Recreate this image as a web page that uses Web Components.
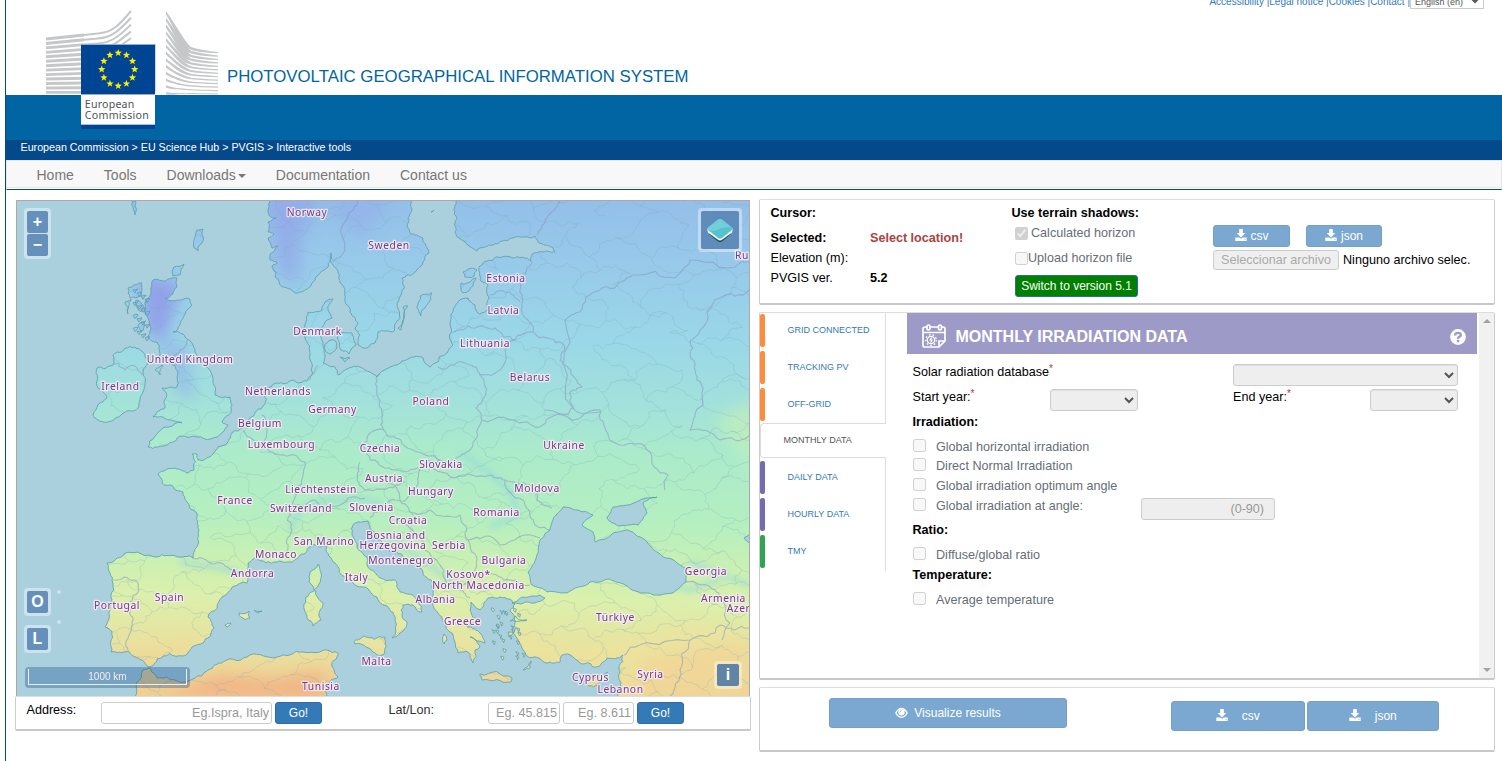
<!DOCTYPE html>
<html lang="en">
<head>
<meta charset="utf-8">
<title>PVGIS Interactive tools</title>
<style>
html,body{margin:0;height:100%}
body{overflow:hidden;background:#fff;font-family:"Liberation Sans",Arial,sans-serif;font-size:12.6px;line-height:20px;color:#000}
</style>
</head>
<body>
<pvgis-app></pvgis-app>
<script>
const define=(name,html,init)=>customElements.define(name,class extends HTMLElement{
  constructor(){super();this.attachShadow({mode:'open'}).innerHTML='<style>*{box-sizing:border-box}:host{display:block;box-sizing:border-box}</style>'+html;}
  connectedCallback(){if(init)init.call(this,this.shadowRoot);}
});

/* Commission logo: sweeping stripes, flag and caption */
define('ec-logo',`<style>:host{width:174px;height:122px;flex:none}svg{display:block}text{font-family:"Noto Sans",sans-serif;font-size:10.6px;fill:#4d5356}</style>
<svg width="174" height="122" viewBox="45 8 174 122"><g id="s" fill="none" stroke="#c5c7c8"></g><g id="w" fill="#c5c7c8"></g>
<rect x="81" y="44.5" width="74" height="50" fill="#004494"/><rect x="81" y="44" width="74.5" height="1" fill="#8eaed2"/><rect x="155" y="45" width="1" height="46" fill="#c9d6e8"/><g id="st" fill="#ffed00"></g>
<rect x="81" y="94" width="74" height="31" fill="#fff"/><rect x="81" y="94" width="74" height="1" fill="#9dadbd"/><rect x="81" y="124" width="74" height="1.4" fill="#aabfda"/><rect x="81" y="125" width="74" height="4" fill="#004494"/>
<text x="84.8" y="108" textLength="49.5">European</text><text x="84.8" y="119" textLength="64">Commission</text></svg>`,
function(r){
  let s='',w='',t='';
  for(let i=0;i<13;i++){const y=39+i*4.45,m=33.5+i*5,e=12+i*6.8;
    s+=`<path stroke-width="2.9" d="M46 ${y}L84 ${Math.min(y,y-4+i*.35)}"/>`;
    if(i<5)s+=`<path stroke-width="2" d="M84 ${y-4+i*.35}L98 ${m}C112 ${m-1} 119 ${m-8+i*.3} 131 ${e-1}"/>`;}
  for(let i=0;i<13;i++){const y=11+i*6.75,e=52+i*3.45,k=1-i/13;
    w+=`<path d="M166 ${y}C${171+k*3} ${y+10*k+1} ${181+k*4} ${e-10*k} 191 ${e-5*k}Q200 ${e-2*k} 218 ${e}V${e+1.2}Q198 ${e+.8} 189 ${e-4*k+1}C180 ${e-6*k} 174 ${y+13*k+3} 166 ${y+3.6-i*.1}Z"/>`;}
  for(let i=0;i<12;i++){const a=i*Math.PI/6,cx=118.2+16.5*Math.sin(a),cy=69.4-16.5*Math.cos(a);let p='';
    for(let k=0;k<10;k++){const q=k*Math.PI/5,R=k%2?1.6:3.9;p+=(cx+R*Math.sin(q)).toFixed(2)+','+(cy-R*Math.cos(q)).toFixed(2)+' ';}
    t+=`<polygon points="${p}"/>`;}
  r.getElementById('s').innerHTML=s;r.getElementById('w').innerHTML=w;r.getElementById('st').innerHTML=t;
});

define('pv-header',`<style>
:host{height:140px;background:linear-gradient(#fff 95px,#0065a2 95px)}
.row{display:flex;height:140px;padding-left:39px}
h1{margin:67px 0 0 8px;font-size:16.8px;line-height:19px;font-weight:400;color:#0065a2;white-space:nowrap;height:19px}
ec-logo{margin-top:8px}
.links{margin:-9px 18px 0 auto;display:flex;height:18px;font-size:10px;line-height:22px;color:#337ab7;white-space:pre}
select{height:18px;width:74px;border:1px solid #ccc;background:#fff;font:9px "Liberation Sans";color:#555;padding:3px 0 0}
</style><div class="row"><ec-logo></ec-logo><h1>PHOTOVOLTAIC GEOGRAPHICAL INFORMATION SYSTEM</h1>
<div class="links"><a>Accessibility </a>|<a>Legal notice </a>|<a>Cookies </a>|<a>Contact </a>|<select><option>English (en)</option></select></div></div>`);

define('pv-crumbs',`<style>:host{height:20px;background:#044a8b;color:#fff;font-size:10.7px;line-height:15px;padding-left:14.5px}</style><slot></slot>`);

define('pv-nav',`<style>:host{height:30px;background:#f8f8f8;border:1px solid #e7e7e7;border-bottom:1px solid #044a8b;box-shadow:inset 0 -1px #fff,inset 0 -2px #e7e7e7;padding-left:29.5px;display:flex;gap:30px;font-size:14px;line-height:29px;color:#777}
i{display:inline-block;border:4px solid transparent;border-top-color:#777;border-bottom:0;margin-left:2px;vertical-align:middle}</style>
<span>Home</span><span>Tools</span><span>Downloads<i></i></span><span>Documentation</span><span>Contact us</span>`);

define('pv-panel',`<style>:host{border:1px solid #ccc;border-top-color:#ddd;border-bottom:2px solid #c8c8c8;border-radius:2px;background:#fff}</style><slot></slot>`);

define('pv-button',`<style>:host{display:flex;align-items:center;justify-content:center;height:22px;border:1px solid #2e6da4;border-radius:3px;background:#337ab7;color:#fff;font-size:12px;gap:var(--gap,4px);white-space:nowrap}
:host([disabled]){background:#7aa8d1;border-color:#759fc7}:host([green]){background:#008000;border-color:#2e6da4}</style><slot></slot>`);

define('icon-download',`<style>:host{width:12px;height:12px;flex:none}svg{display:block;margin-top:-1px}</style><svg width="12" height="12" viewBox="0 0 12 12" fill="#fff"><path d="M4.200 0h3.600v4h2.500L6 8.400 1.700 4h2.500z"/><path d="M.3 8.500h4L6 9.800l1.700-1.300h4V12H.3z"/><path fill="#7aa8d1" d="M9.500 10h1v.8h-1z"/></svg>`);
define('icon-eye',`<style>:host{width:13px;height:12px;flex:none}svg{display:block}</style><svg width="13" height="12" viewBox="0 0 14 12"><path fill="none" stroke="#fff" stroke-width="1.500" d="M.9 6Q3.400 1.200 7 1.200T13.100 6Q10.600 10.600 7 10.600T.9 6z"/><circle cx="7" cy="5.200" r="3.400" fill="#fff"/><path fill="none" stroke="#7aa8d1" stroke-width=".9" d="M5.300 5.400Q5.300 3.600 7 3.500"/></svg>`);

/* Map geometry is drawn in page pixels; coastlines get a seeded roughening */
define('pv-map',`<style>
:host{position:relative;height:496px;border:1px solid #aaa;border-bottom:0;overflow:hidden}
svg{display:block}text{font-family:"Noto Sans",sans-serif;font-size:10.3px;letter-spacing:.55px;text-anchor:middle;fill:#773a7d;font-weight:400;stroke:#f3ecf7;stroke-width:2.6px;stroke-opacity:.85;paint-order:stroke;stroke-linejoin:round}
.c{position:absolute;background:rgba(255,255,255,.4);border-radius:4px;padding:3px}
.c b{display:flex;align-items:center;justify-content:center;width:21px;height:22px;background:#6590bb;color:#fff;font-size:16px;border-radius:2px}
.c b+b{margin-top:1px}
.dot{position:absolute;width:4px;height:4px;border-radius:2px;background:rgba(255,255,255,.4);left:40px}
.scale{position:absolute;left:8px;bottom:8px;width:165px;height:21px;border-radius:4px;background:rgba(0,60,136,.3);padding:2px 3px}
.scale div{height:16px;border:1px solid #eee;border-top:0;color:#eee;font-size:10px;line-height:15px;text-align:center}
</style>
<svg width="732" height="495" viewBox="17 201 732 495">
<defs><linearGradient id="g" gradientUnits="userSpaceOnUse" x1="380" y1="201" x2="370" y2="696"><stop offset="0" stop-color="#94bfe9"/><stop offset=".1" stop-color="#97c8ea"/><stop offset=".27" stop-color="#9ad7e8"/><stop offset=".4" stop-color="#a2e1dc"/><stop offset=".5" stop-color="#abebcb"/><stop offset=".64" stop-color="#b5efc0"/><stop offset=".72" stop-color="#c8f0b4"/><stop offset=".8" stop-color="#dbf0ac"/><stop offset=".9" stop-color="#e8e3a0"/><stop offset="1" stop-color="#f0cf94"/></linearGradient>
<filter id="b" x="-50%" y="-50%" width="200%" height="200%"><feGaussianBlur stdDeviation="8"/></filter><filter id="b2" x="-50%" y="-50%" width="200%" height="200%"><feGaussianBlur stdDeviation="3"/></filter>
<clipPath id="k"></clipPath></defs>
<rect x="17" y="201" width="732" height="495" fill="#aad0de"/>
<g id="land" fill="url(#g)"></g>
<g clip-path="url(#k)">
 <g filter="url(#b)">
 <path fill="#93a4e9" opacity=".7" d="M265 195H320L300 240 298 285 280 275z"/><path fill="#9098ea" opacity=".85" d="M140 275L182 283 165 340 145 335z"/><path fill="#93b5ea" opacity=".8" d="M155 335L185 345 195 400 180 395z"/><path fill="#93aceb" opacity=".5" d="M320 195H395L360 240z"/>
 <path fill="#f2b184" opacity=".9" d="M160 696L220 675 270 680 325 670V700z"/><path fill="#f2c08c" opacity=".8" d="M640 660L750 640V700H640z"/><path fill="#f2d894" opacity=".6" d="M125 650L200 635 190 655 130 660z"/><path fill="#efe39c" opacity=".6" d="M515 625L560 650 620 640 700 620 750 640V700H520z"/><path fill="#c4f1b5" opacity=".7" d="M715 420L755 400V470z"/>
 </g>
 <g filter="url(#b2)" fill="none" stroke="#8fd5df" stroke-width="5" opacity=".6"><path d="M290 530L300 510 325 500 365 500 385 505M460 452L485 470 510 490 518 515 490 527M385 535L430 565 460 590M640 575L690 590 720 580M690 562L749 585M180 562L215 567 240 573"/></g>
 <g id="mesh" fill="none" stroke="#7fa7b8" stroke-width=".7" opacity=".38"></g>
 <g id="bord" fill="none" stroke="#8795bd" stroke-width="1.100" opacity=".55"></g>
</g>
<g id="sea" fill="#aad0de"></g>
<g id="coast" fill="none" stroke="#5c9daa" stroke-width=".8"></g>
<g id="lab"></g></svg>
<div class="c" style="left:7px;top:7px"><b>+</b><b>−</b></div>
<div class="c" style="left:7px;top:387px"><b>O</b></div><div class="c" style="left:7px;top:424px"><b>L</b></div><i class="dot" style="top:389px"></i><i class="dot" style="top:419px"></i>
<div class="c" style="right:7px;top:7px"><b style="width:38px;height:38px;background:#5f8cba"><svg width="28" height="28" viewBox="0 0 28 28"><path fill="#24505e" d="M3 14L14 24.5 25 14V17Q25 18 24 19L16 25.5Q14 27 12 25.5L4 19Q3 18 3 17z"/><path fill="#fff" d="M1.500 12H26.500V15Q26.500 16 25.500 17L16 23.800Q14 25 12 23.800L2.500 17Q1.500 16 1.500 15z"/><path fill="#53c3d0" d="M2 11.500L11.500 4Q14 2 16.500 4L26 11.500Q27 13 26 14L16 22Q14 23.500 12 22L2 14Q1 13 2 11.500z"/><path fill="#72cfda" d="M2 11.500L11.500 4Q14 2 16.500 4L26 11.500Q16 10.500 11 14 7 15.500 2.500 14.500Q1 13 2 11.500z"/></svg></b></div>
<div class="c" style="right:7px;bottom:7px"><b style="background:#5f84a5;width:22px">i</b></div>
<div class="scale"><div>1000 km</div></div>`,
function(r){
 let seed=7;const rnd=()=>(seed=(seed*16807)%2147483647)/2147483647-.5;
 const rough=(s,closed=true,amp=.34)=>{let p=s.trim().split(/\s+/).map(v=>v.split(',').map(Number));if(closed)p.push(p[0]);
  for(let n=0;n<3;n++){const q=[p[0]];for(let i=1;i<p.length;i++){const a=p[i-1],b=p[i],dx=b[0]-a[0],dy=b[1]-a[1],l=Math.hypot(dx,dy);
   if(l>3&&l<140){const t=rnd()*amp;q.push([(a[0]+b[0])/2-dy*t,(a[1]+b[1])/2+dx*t]);}q.push(b);}p=q;}
  return 'M'+p.map(v=>v[0].toFixed(1)+','+v[1].toFixed(1)).join('L')+(closed?'Z':'');};
 const land=[
 '270,201 269,215 276,218 268,222 268,232 274,234 268,238 272,248 278,246 270,254 270,260 277,262 272,266 276,272 275,277 287,288 298,293 310,287 320,273 328,267 331,253 333,265 338,272 342,285 345,298 350,312 358,323 355,328 360,335 358,345 367,348 375,343 378,332 385,331 393,332 400,318 401,295 402,278 413,274 423,262 429,253 423,238 410,233 408,218 411,200 411,40 270,40',
 '456,201 457,218 455,232 468,245 477,251 493,245 513,238 535,236 538,242 553,248 555,252 543,252 532,254 531,261 513,258 493,260 479,267 480,280 488,285 489,298 488,310 480,314 475,305 468,298 458,302 453,312 451,328 453,345 447,353 439,357 438,362 430,367 423,358 408,359 397,365 380,373 377,377 370,372 360,367 347,369 338,375 335,367 323,363 325,355 323,342 320,333 332,318 328,310 333,299 325,302 322,310 308,312 306,322 305,338 310,355 312,375 308,380 293,380 277,383 265,390 262,408 250,418 243,428 232,432 227,443 213,454 210,457 198,460 197,454 192,454 194,470 187,473 175,468 158,474 162,483 183,492 188,503 197,513 199,530 197,547 193,558 177,557 157,557 125,553 117,558 107,563 110,573 113,583 110,610 105,627 112,632 111,652 128,651 138,658 148,667 157,659 183,656 192,647 203,643 214,628 208,617 222,597 247,583 248,563 255,558 277,562 287,562 300,555 312,545 327,547 335,563 353,583 377,597 390,610 396,623 392,638 400,633 407,622 402,615 403,605 413,605 422,612 418,602 400,592 395,580 380,578 367,557 357,547 352,533 353,525 368,521 370,528 378,540 390,552 410,562 423,573 433,583 433,602 442,617 452,633 455,642 458,653 468,652 473,663 475,650 480,647 470,637 485,643 480,633 467,627 480,622 470,610 471,602 480,610 488,598 500,597 510,599 515,604 510,610 515,623 513,633 522,648 527,656 547,663 560,662 562,655 580,663 593,667 607,658 623,655 619,667 621,683 617,697 760,860 760,40 456,40',
 '153,280 177,278 177,287 165,298 190,299 192,305 180,325 173,332 183,334 193,345 200,362 213,382 215,395 230,397 232,405 222,422 228,425 223,432 197,437 177,438 167,445 148,447 163,428 182,423 170,420 153,417 165,408 162,388 177,387 178,372 170,363 158,358 157,342 148,338 148,318 145,302',
 '125,348 143,352 148,362 143,373 143,392 138,408 123,413 103,422 93,415 107,398 98,388 97,368 113,365 113,355',
 '135,697 143,670 150,668 157,678 175,680 193,679 208,670 223,662 250,655 277,657 303,652 327,650 338,653 332,663 338,677 327,687 327,697 327,780 135,780',
 '318,564 321,573 319,584 314,590 309,582 310,572','316,591 323,603 321,620 313,626 307,618 306,597','354,642 364,636 385,637 383,655 372,651 355,644','239,613 249,611 250,618 245,620','254,610 262,611 258,613','225,625 231,623 227,627','480,674 512,678 511,682 482,680','585,681 593,677 608,672 598,685 589,686','325,344 334,340 337,348 331,354 326,352','338,335 352,333 356,345 349,354 341,350','340,357 350,358 345,362','420,296 432,293 427,305 421,316 417,308','403,307 408,306 401,330 398,328','461,283 476,278 473,286 463,293','463,272 477,270 474,276 465,277','197,230 203,229 198,251 194,248 194,240','174,267 184,264 180,275 173,276','128,288 142,283 141,296 130,298','125,302 131,299 128,314','136,300 144,307 141,312','138,325 144,322 141,332','132,201 136,202 135,215','523,670 531,661 530,668','444,634 447,640 444,644','431,212 434,210','527,620 515,616 510,621','508,632 513,632 509,637','155,370 163,365 160,375'];
 for(let i=0;i<26;i++){const x=487+Math.abs(rnd())*70,y=607+Math.abs(rnd())*110;land.push(`${x},${y} ${x+3},${y+1} ${x+2},${y+4}`);}
 for(let i=0;i<16;i++){const x=133+i%4*4,y=290+i*3.2;land.push(`${x},${y} ${x+5},${y-1} ${x+2},${y+3}`);}
 const sea=['563,507 577,510 593,515 582,525 593,532 595,542 613,533 628,530 647,542 663,557 685,568 686,582 673,593 647,593 625,585 610,579 590,582 567,593 547,592 532,585 528,572 538,553 540,540 550,530 552,522','607,518 613,507 640,500 657,497 643,503 647,513 638,525 618,526','512,603 522,597 540,595 545,598 535,603 520,604','750,533 744,538 750,544'];
 const L=land.map(s=>rough(s)),S=sea.map(s=>rough(s,true,.2));
 const P=a=>a.map(d=>`<path d="${d}"/>`).join('');
 const $=i=>r.getElementById(i);
 $('land').innerHTML=P(L);$('k').innerHTML=P(L);$('sea').innerHTML=P(S);$('coast').innerHTML=P(L.concat(S));
 /* irregular province mesh */
 const pt={},W=27,H=24,g=(i,j)=>pt[i+'_'+j]||(pt[i+'_'+j]=[80+i*W+(j%2?W/2:0)+rnd()*17,200+j*H+((i+j)%2?6:-6)+rnd()*14]);
 let m='';for(let i=0;i<26;i++)for(let j=0;j<22;j++){const a=g(i,j),b=g(i+1,j),c=g(i,j+1);if(rnd()<.38)m+=rough(a+' '+b,false,.5);if((i+j)%2)m+=rough(a+' '+c,false,.5);}
 $('mesh').innerHTML=`<path d="${m}"/>`;
 $('bord').innerHTML=P(['333,262 345,245 343,225 357,205 355,190','537,235 545,220 560,201','532,261 525,275 522,298 528,320 533,332','490,295 505,292 520,302','453,332 468,326 495,328 515,340','515,340 500,370 480,375 470,365 438,367','533,332 548,338 564,345 563,365 575,378 582,387 570,392 573,408','533,332 515,340','480,375 484,398 476,408 482,420 525,422 540,427 562,415 573,408 600,410 605,428 620,445 650,452 668,475 665,490','380,374 377,395 382,418 384,430 401,440 418,452 440,460 455,460 470,450 482,420','573,408 565,320 580,312 600,290 625,280 635,275 675,278 690,260 749,262','749,290 720,298 700,330 690,355 697,380 703,405 690,430 720,440 749,436','262,415 267,425 262,445 280,455 305,462 296,490 290,510 292,530 288,545 288,558','310,380 318,365','384,430 360,445 370,460 385,468 400,470 420,468 440,460','360,462 357,480 365,490 388,488 405,482','292,505 315,500 340,505 365,498','243,430 265,448','192,557 212,564 233,570 247,573','113,580 135,580 139,590 130,602 133,620 129,635 128,650','420,468 415,490 395,500 380,510 370,518','420,468 455,478 490,475 505,480 530,485 537,500 552,508','430,510 460,515 468,540 500,545 540,538','505,480 525,505 535,525 550,530','400,520 420,535 425,550 440,565 445,590','468,540 475,570 460,590 470,598','487,575 510,580 530,585','624,655 640,645 690,640 720,625 749,628','686,582 715,590 725,605 722,640','690,640 680,670 670,696','110,362 125,370 135,366 142,375','167,360 180,350 188,338','545,410 600,412','385,480 400,500 410,512 430,510'].map(s=>rough(s,false,.4)));
 $('lab').innerHTML=[['Norway',307,216],['Sweden',389,249],['Estonia',506,282],['Latvia',503.500,314],['Lithuania',485,347],['Denmark',317.500,335],['United Kingdom',190,363],['Ireland',120.500,390],['Belarus',530,381],['Poland',431,405],['Netherlands',278,395],['Germany',332.500,413],['Belgium',260,427],['Luxembourg',281.500,448],['Czechia',380,452],['Ukraine',564,449],['Slovakia',441,468],['Austria',384,482],['Liechtenstein',321,493],['Hungary',431,495],['Moldova',537,492],['France',235,504],['Switzerland',301,512],['Slovenia',371.500,511],['Romania',496.500,516],['Croatia',408,524],['San Marino',324,545],['Bosnia and',396,539],['Herzegovina',393,549],['Serbia',449,549],['Monaco',276,558],['Montenegro',401,564],['Bulgaria',504,564],['Georgia',706,575],['Andorra',252.500,577],['Italy',356.500,581],['Kosovo*',468.500,578],['North Macedonia',478.500,589],['Spain',169.500,601],['Portugal',117,609],['Albania',435.500,603],['Armenia',723.500,602],['Azer',738.500,612],['Greece',462.500,625],['Türkiye',615.500,621],['Malta',376.500,665],['Syria',650.500,678],['Cyprus',590.500,681],['Tunisia',321,690],['Lebanon',620.500,693],['Ru',742,259]].map(a=>`<text x="${a[1]}" y="${a[2]}">${a[0]}</text>`).join('');
});

define('pv-location',`<style>:host{height:32px;display:flex;padding:5px 10px 0}
span{line-height:16px}input{height:22px;border:1px solid #ccc;border-radius:3px;text-align:right;padding:0 2px;font:12.6px "Liberation Sans";background:#fff;min-width:0}input::placeholder{color:#999}pv-button{width:47px}</style>
<span style="width:75px;padding-left:.5px">Address:</span><input style="width:171px;margin-right:3px" placeholder="Eg.Ispra, Italy"><pv-button>Go!</pv-button><span style="margin-left:66.500px;width:99.500px;color:#333">Lat/Lon:</span><input style="width:72px;margin-right:3px" placeholder="Eg. 45.815"><input style="width:71px;margin-right:3px" placeholder="Eg. 8.611"><pv-button>Go!</pv-button>`);

define('pv-status',`<style>:host{height:103px;display:grid;grid-template-columns:241px 201.500px 1fr;padding-left:10.500px}
.a{display:grid;grid-template-columns:99.500px 1fr;grid-template-rows:25px 20px 20px 20px;line-height:20px;padding-top:3px;align-content:start}.a>*{height:20px}.red{color:#a94442}
.b{padding-top:3px;color:#666e76}.b strong{display:block;color:#000}.r{display:flex;align-items:center;height:20px;padding-left:3.500px;gap:3px}input{margin:0;width:13px;height:13px}
.c{padding-top:25px}.d{display:flex;gap:16px;margin-bottom:3px}.f{display:flex;gap:4px;line-height:20px}.f span{white-space:nowrap}.f button{width:126px;height:20px;border:1px solid #ccc;border-radius:3px;background:#efefef;color:#aaa;font:12.6px "Liberation Sans";padding:0;white-space:nowrap}</style>
<div class="a"><b>Cursor:</b><b></b><b>Selected:</b><b class="red">Select location!</b><span>Elevation (m):</span><span></span><span>PVGIS ver.</span><b>5.2</b></div>
<div class="b"><strong>Use terrain shadows:</strong><div class="r"><input type="checkbox" checked disabled>Calculated horizon</div><div class="r" style="margin-top:5px;gap:0"><input type="checkbox" disabled>Upload horizon file</div><pv-button green style="width:123px;margin:7px 0 0 3.500px">Switch to version 5.1</pv-button></div>
<div class="c"><div class="d"><pv-button disabled style="width:77px"><icon-download></icon-download>csv</pv-button><pv-button disabled style="width:76px"><icon-download></icon-download>json</pv-button></div><div class="f"><button>Seleccionar archivo</button><span>Ninguno archivo selec.</span></div></div>`);

define('pv-tab',`<style>:host{height:37px;display:flex;border-right:1px solid #ddd;padding:1px 0 3px;font-size:9px;line-height:32px;color:#337ab7;white-space:nowrap}
:host::before{content:"";width:5px;height:33px;border-radius:2px;background:var(--bar);margin-right:22.500px}
:host([active]){height:36px;border:1px solid #ddd;border-right-color:transparent;border-radius:4px 0 0 4px;padding:0;line-height:33px;color:#555}:host([active])::before{display:none}:host([active]) slot{display:block;padding-left:22.500px}</style><slot></slot>`);

define('pv-check',`<style>:host{display:flex;height:var(--h,20px);line-height:20px;color:#666e76}input{margin:2px 10.500px 0 0;width:13px;height:13px;flex:none}</style><input type="checkbox" disabled><slot></slot>`);

define('pv-form',`<style>:host{width:570px}
header{height:41px;background:#9e9ac8;color:#fff;display:flex;align-items:center;padding:0 11px 0 15px;font-weight:700;font-size:16px}header span{flex:1;padding:7px 0 0 8.500px}header>svg{margin-top:4px}header>svg.q{margin-top:6px}
.g{padding:10px 19px 0 5.500px;display:grid;grid-template-columns:137.500px 88px 95px 137px 88px;line-height:16px}
select{background:#eee;border:1px solid #ccc;border-radius:3px;height:22px;width:100%;color:#555;display:block;box-shadow:inset 0 1px 1px rgba(0,0,0,.06)}
sup{color:#b33;font-size:10px;line-height:0;vertical-align:4px}b{display:block;height:20px}
.k{padding-left:5.500px}.an{display:flex}.an input{margin:2px 0 -12px 58px;width:134px;height:22px;border:1px solid #ccc;border-radius:3px;background:#eee;text-align:right;padding:0 10px;font:12.6px "Liberation Sans"}input::placeholder{color:#999}</style>
<header><svg width="25" height="24" viewBox="0 0 25 24" fill="none" stroke="#fff" stroke-width="1.700"><path d="M5 3H3Q1 3 1 5V21Q1 23 3 23H17L23 17V5Q23 3 21 3H19.500M8 3H16.500M1 8.500H23M17 23V17H23"/><rect x="5" y="1" width="3" height="5" rx="1.500"/><rect x="16.500" y="1" width="3" height="5" rx="1.500"/><circle cx="9" cy="16" r="3.700" stroke-width="1.300"/><circle cx="9" cy="16" r="5.300" stroke-width="1.300" stroke-dasharray="1.600 2.100"/><path stroke-width="1.200" d="M9.700 13.500l-1.500 2.500h1.800l-1.300 2.500"/></svg><span>MONTHLY IRRADIATION DATA</span><svg class="q" width="16" height="16" viewBox="0 0 16 16"><circle cx="8" cy="8" r="7.900" fill="#fff"/><path fill="none" stroke="#9e9ac8" stroke-width="2.400" d="M5.100 6.400Q5.100 3.900 8 3.900T10.800 6.100Q10.800 7.200 9.300 7.900T8 9.900"/><path fill="#9e9ac8" d="M6.800 10.900h2.400V13.200H6.800z"/></svg></header>
<div class="g"><span style="grid-column:1/4">Solar radiation database<sup>*</sup></span><div style="grid-column:4/6;height:25px"><select></select></div><span>Start year:<sup>*</sup></span><div><select></select></div><i></i><span>End year:<sup>*</sup></span><div><select></select></div></div>
<div class="k"><b style="margin-top:1px">Irradiation:</b><div style="height:5px"></div><pv-check style="--h:19px">Global horizontal irradiation</pv-check><pv-check>Direct Normal Irradiation</pv-check><pv-check>Global irradiation optimum angle</pv-check><div class="an"><pv-check style="--h:14px">Global irradiation at angle:</pv-check><input placeholder="(0-90)"></div><b style="margin-top:10px;height:25px">Ratio:</b><pv-check>Diffuse/global ratio</pv-check><b style="height:25px">Temperature:</b><pv-check>Average temperature</pv-check></div>`);

define('pv-tools',`<style>:host{height:365px;display:flex}.t{width:126px;margin-right:21px;flex:none}.s{margin-left:2px;width:15px;background:#f1f1f1;display:flex;flex-direction:column;justify-content:space-between;align-items:center;padding:6px 0}.s i{border:4px solid transparent;border-top:0;border-bottom:4px solid #a3a3a3}.s i+i{border-bottom:0;border-top:4px solid #a3a3a3}.o{--bar:#fd8d3c}.p{--bar:#756bb1}</style>
<div class="t"><pv-tab class="o">GRID CONNECTED</pv-tab><pv-tab class="o">TRACKING PV</pv-tab><pv-tab class="o">OFF-GRID</pv-tab><pv-tab active style="margin-top:-1px;height:35px">MONTHLY DATA</pv-tab><pv-tab class="p" style="padding-top:3px">DAILY DATA</pv-tab><pv-tab class="p" style="padding-top:3px">HOURLY DATA</pv-tab><pv-tab style="--bar:#31a354;padding-top:3px;height:39px">TMY</pv-tab></div><pv-form></pv-form><div class="s"><i></i><i></i></div>`);

define('pv-results',`<style>:host{height:62px;display:flex;padding:10px 55px 0 69px}pv-button{height:30px}</style><pv-button disabled style="width:238px;margin-right:auto;--gap:6px"><icon-eye></icon-eye>Visualize results</pv-button><pv-button disabled style="width:134px;margin:3px 2px 0 0;--gap:13.500px"><icon-download></icon-download>csv</pv-button><pv-button disabled style="width:132px;margin-top:3px;--gap:13.500px"><icon-download></icon-download>json</pv-button>`);

define('pvgis-app',`<style>:host{margin-left:5px;border-left:1px solid #044a8b;height:761px;overflow:hidden}main{display:flex;align-items:flex-start;padding:9px 7px 0 9px}.l{width:736px;flex:none}.l pv-map{margin:1px 1px 0}.r{width:736px;margin-left:8px;display:grid;gap:7px}</style>
<pv-header></pv-header><pv-crumbs>European Commission &gt; EU Science Hub &gt; PVGIS &gt; Interactive tools</pv-crumbs><pv-nav></pv-nav>
<main><section class="l"><pv-map></pv-map><pv-panel><pv-location></pv-location></pv-panel></section><section class="r"><pv-panel><pv-status></pv-status></pv-panel><pv-panel><pv-tools></pv-tools></pv-panel><pv-panel><pv-results></pv-results></pv-panel></section></main>`);
</script>
</body>
</html>
